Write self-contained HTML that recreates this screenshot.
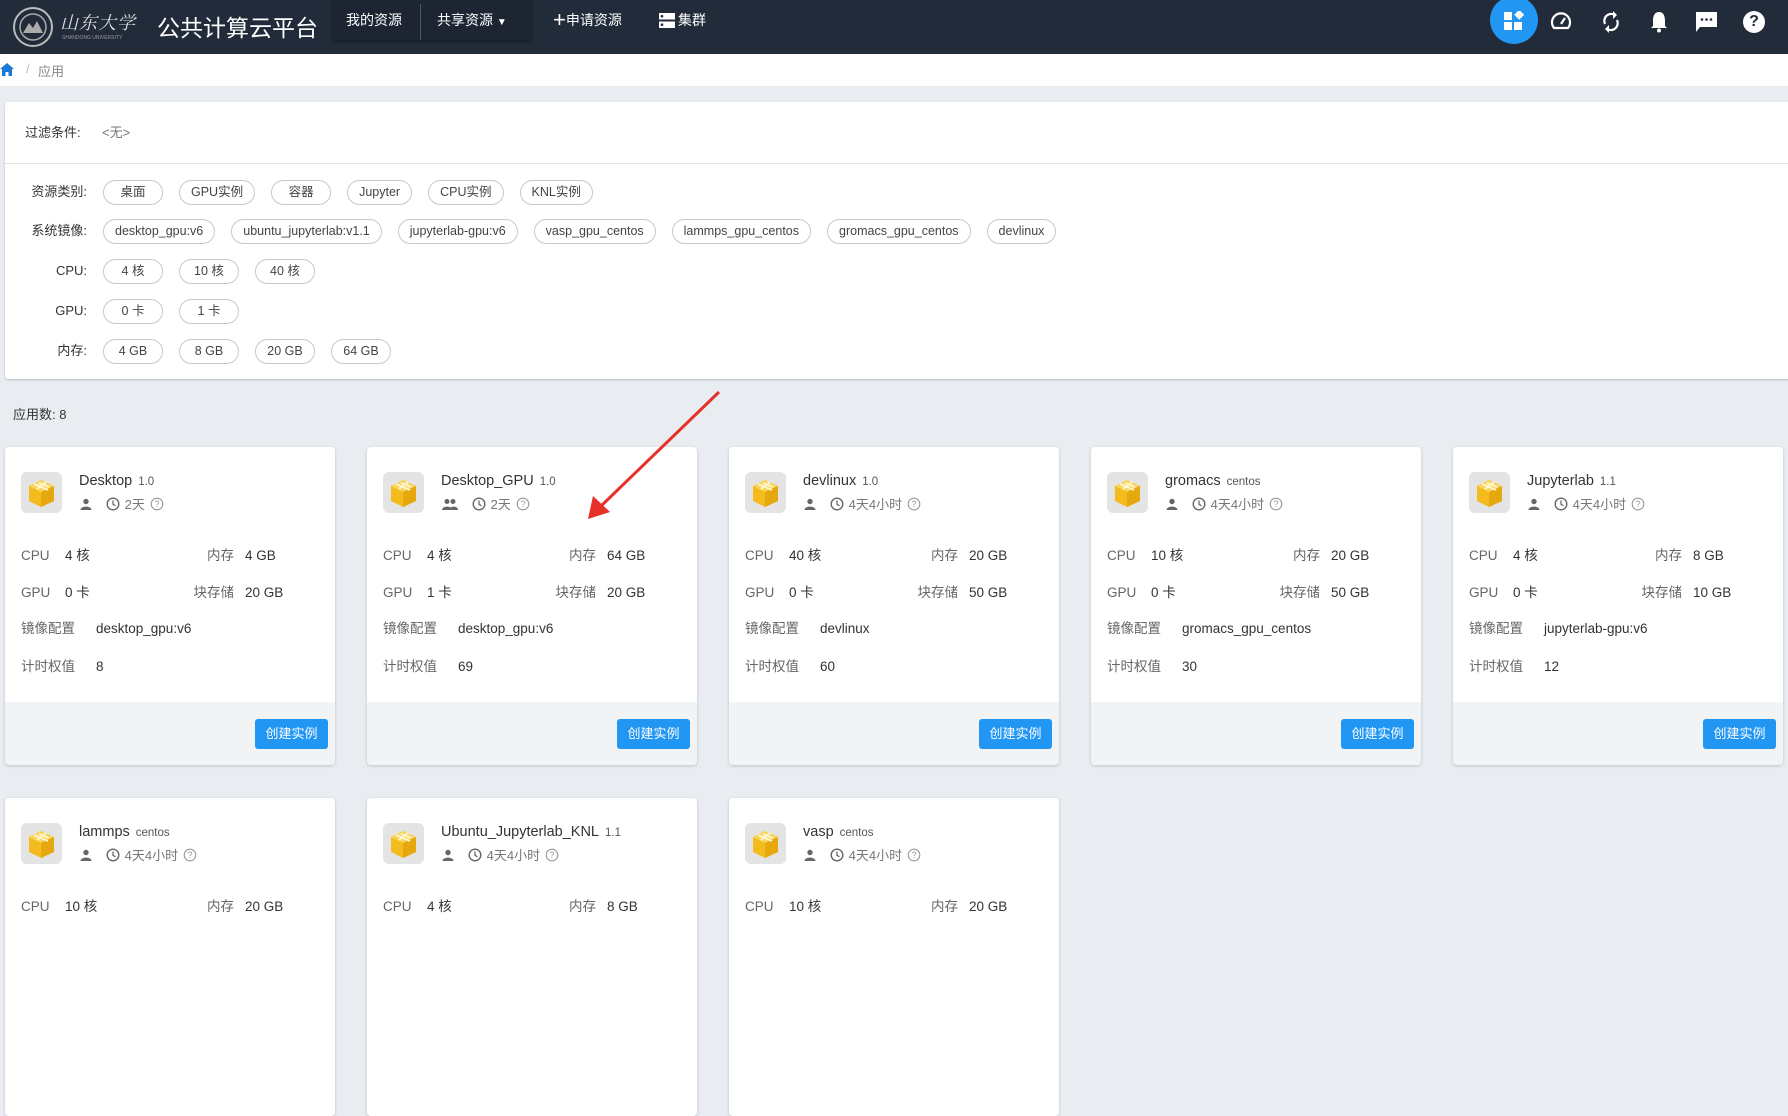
<!DOCTYPE html>
<html><head><meta charset="utf-8"><style>
*{box-sizing:border-box;margin:0;padding:0}
body{width:1788px;height:909px;overflow:hidden;background:#e9edf1;font-family:"Liberation Sans","Noto Sans CJK SC",sans-serif;color:#333;position:relative}
.hdr{position:absolute;left:0;top:0;width:1788px;height:54px;background:#222b39}
.abs{position:absolute}
.nav{position:absolute;top:0;height:40px;color:#fff;font-size:14px;line-height:40px}
.crumb{position:absolute;top:54px;left:0;width:1788px;height:32px;background:#fff}
.panel{position:absolute;left:5px;top:102px;width:1790px;height:277px;background:#fff;border-radius:3px;box-shadow:0 1px 2px rgba(0,0,0,.2)}
.row{position:absolute;left:0;height:26px;display:flex;align-items:center}
.lbl{width:80px;text-align:right;font-size:13px;color:#333;margin-right:16px;line-height:24px}
.chip{height:25px;border:1px solid #c8c8c8;border-radius:13px;padding:0 11px;font-size:12.5px;line-height:23px;color:#444;margin-right:16px;min-width:60px;text-align:center}
.card{position:absolute;width:330px;height:318px;background:#fff;border-radius:4px;box-shadow:0 1px 3px rgba(0,0,0,.18);overflow:hidden}
.card .ic{position:absolute;left:16px;top:25px;width:41px;height:41px;background:#e6e6e6;border-radius:6px}
.card .t{position:absolute;left:74px;top:26px;font-size:14.5px;color:#333}
.card .t small{font-size:11.5px;color:#555;margin-left:6px}
.card .m{position:absolute;left:75px;top:47px;font-size:13px;color:#777;display:flex;align-items:center;gap:5px}
.card .r{position:absolute;font-size:13.5px;line-height:18px}
.g{color:#666}
.card .f{position:absolute;left:0;top:255px;width:330px;height:63px;background:#f2f3f4}
.btn{position:absolute;right:7px;top:17px;width:73px;height:30px;background:#2196f3;color:#fff;font-size:13px;line-height:30px;text-align:center;border-radius:3px}
</style></head><body>
<div class="hdr">
 <svg class="abs" style="left:12px;top:6px" width="42" height="42" viewBox="0 0 42 42"><circle cx="21" cy="21" r="19" fill="none" stroke="#bbb" stroke-width="2"/><circle cx="21" cy="21" r="13" fill="none" stroke="#aaa" stroke-width="1.5"/><path d="M11 27 L17 17 L21 22 L25 15 L31 27Z" fill="#aaa"/></svg>
 <div class="abs" style="left:60px;top:9px;color:#ddd;font-family:'Noto Serif CJK SC',serif;font-size:18px;font-style:italic;letter-spacing:1px">山东大学</div>
 <div class="abs" style="left:62px;top:35px;color:#999;font-size:5px">SHANDONG UNIVERSITY</div>
 <div class="abs" style="left:157px;top:9px;color:#fff;font-size:23px">公共计算云平台</div>
 <div class="abs" style="left:332px;top:0;width:200px;height:40px;background:#1d2532;box-shadow:0 2px 3px rgba(0,0,0,.3)"></div>
 <div class="abs" style="left:420px;top:4px;width:1px;height:36px;background:#4a5566"></div>
 <div class="nav" style="left:346px">我的资源</div>
 <div class="nav" style="left:437px">共享资源 <span style="font-size:10px">▼</span></div>
 <div class="nav" style="left:553px"><span style="font-size:22px;vertical-align:-2px">+</span>申请资源</div>
 <svg class="abs" style="left:659px;top:13px" width="16" height="15"><rect x="0" y="0" width="16" height="6.5" fill="#fff"/><rect x="0" y="8.5" width="16" height="6.5" fill="#fff"/><circle cx="3" cy="3.2" r="1.3" fill="#222b39"/><circle cx="3" cy="11.7" r="1.3" fill="#222b39"/></svg>
 <div class="nav" style="left:678px">集群</div>
 <div class="abs" style="left:1490px;top:-4px;width:48px;height:48px;border-radius:50%;background:#2196f3"></div>
 <svg class="abs" style="left:1504px;top:11px" width="20" height="20"><rect x="0" y="1" width="8" height="8" fill="#fff"/><rect x="0" y="11" width="8" height="8" fill="#fff"/><rect x="10" y="11" width="8" height="8" fill="#fff"/><rect x="11" y="0" width="7" height="7" fill="#fff" transform="rotate(45 14.5 4.5)"/></svg>
 <svg class="abs" style="left:1550px;top:11px" width="22" height="20" viewBox="0 0 22 20"><path d="M4 17 A9 9 0 1 1 18 17Z" fill="none" stroke="#fff" stroke-width="2.2" stroke-linejoin="round"/><path d="M11 13 L15 7" stroke="#fff" stroke-width="2.2"/></svg>
 <svg class="abs" style="left:1601px;top:10px" width="20" height="24" viewBox="0 0 20 24"><path d="M4 14 A7 7 0 0 1 14 5" fill="none" stroke="#fff" stroke-width="2.2"/><path d="M12 1 L16 5 L12 9Z" fill="#fff"/><path d="M16 10 A7 7 0 0 1 6 19" fill="none" stroke="#fff" stroke-width="2.2"/><path d="M8 15 L4 19 L8 23Z" fill="#fff"/></svg>
 <svg class="abs" style="left:1650px;top:11px" width="18" height="22" viewBox="0 0 18 22"><path d="M9 1 C4 1 3 6 3 10 L3 15 L1 17 L17 17 L15 15 L15 10 C15 6 14 1 9 1Z" fill="#fff"/><circle cx="9" cy="19.5" r="2" fill="#fff"/></svg>
 <svg class="abs" style="left:1696px;top:12px" width="21" height="21" viewBox="0 0 21 21"><path d="M0 0 H21 V15 H4 L0 20Z" fill="#fff"/><circle cx="6" cy="7.5" r="1.3" fill="#222b39"/><circle cx="10.5" cy="7.5" r="1.3" fill="#222b39"/><circle cx="15" cy="7.5" r="1.3" fill="#222b39"/></svg>
 <div class="abs" style="left:1743px;top:11px;width:22px;height:22px;border-radius:50%;background:#fff;color:#222b39;font-weight:bold;font-size:16px;line-height:22px;text-align:center">?</div>
</div>
<div class="crumb">
 <svg class="abs" style="left:0;top:9px" width="14" height="13" viewBox="0 0 14 13"><path d="M7 0 L14 6 H12 V13 H8.5 V9 H5.5 V13 H2 V6 H0Z" fill="#1e78d8"/></svg>
 <div class="abs" style="left:26px;top:7px;font-size:13px;color:#bbb">/</div>
 <div class="abs" style="left:38px;top:7px;font-size:13px;color:#888">应用</div>
</div>
<div class="panel">
 <div class="abs" style="left:20px;top:20px;font-size:13px;color:#333">过滤条件:</div>
 <div class="abs" style="left:97px;top:20px;font-size:13px;color:#777">&lt;无&gt;</div>
 <div class="abs" style="left:0;top:61px;width:100%;height:1px;background:#e4e4e4"></div>
 <div class="row" style="top:77px;left:2px"><div class="lbl">资源类别:</div><div class="chip">桌面</div><div class="chip">GPU实例</div><div class="chip">容器</div><div class="chip">Jupyter</div><div class="chip">CPU实例</div><div class="chip">KNL实例</div></div>
 <div class="row" style="top:116px;left:2px"><div class="lbl">系统镜像:</div><div class="chip">desktop_gpu:v6</div><div class="chip">ubuntu_jupyterlab:v1.1</div><div class="chip">jupyterlab-gpu:v6</div><div class="chip">vasp_gpu_centos</div><div class="chip">lammps_gpu_centos</div><div class="chip">gromacs_gpu_centos</div><div class="chip">devlinux</div></div>
 <div class="row" style="top:156px;left:2px"><div class="lbl">CPU:</div><div class="chip">4 核</div><div class="chip">10 核</div><div class="chip">40 核</div></div>
 <div class="row" style="top:196px;left:2px"><div class="lbl">GPU:</div><div class="chip">0 卡</div><div class="chip">1 卡</div></div>
 <div class="row" style="top:236px;left:2px"><div class="lbl">内存:</div><div class="chip">4 GB</div><div class="chip">8 GB</div><div class="chip">20 GB</div><div class="chip">64 GB</div></div>
</div>
<div class="abs" style="left:13px;top:404px;font-size:13px;color:#333">应用数: 8</div>

<svg width="0" height="0" style="position:absolute"><defs>
<symbol id="box" viewBox="0 0 41 41"><rect width="41" height="41" rx="6" fill="#e4e4e4"/><path d="M8 14 L20 8 L33 14 L33 29 L20 35 L8 29Z" fill="#f3bb1b"/><path d="M8 14 L20 20 L33 14 L20 8Z" fill="#f9d45a"/><path d="M20 20 L20 35 L33 29 L33 14Z" fill="#e6a80f"/><path d="M13 12 L27 18 M16 17 L25 10 M18 11 L28 15" stroke="#fff6cf" stroke-width="2"/></symbol>
<symbol id="user" viewBox="0 0 12 12"><circle cx="6" cy="3.5" r="2.7" fill="#666"/><path d="M0.5 12 C0.5 7.5 11.5 7.5 11.5 12Z" fill="#666"/></symbol>
<symbol id="users" viewBox="0 0 16 12"><circle cx="5" cy="3.5" r="2.5" fill="#666"/><circle cx="11" cy="3.5" r="2.5" fill="#666"/><path d="M0 12 C0 7.5 10 7.5 10 12Z M7 12 C7 8 16 7 16 12Z" fill="#666"/></symbol>
<symbol id="clock" viewBox="0 0 14 14"><circle cx="7" cy="7" r="5.8" fill="none" stroke="#666" stroke-width="1.4"/><path d="M7 3.5 V7.3 L9.5 8.8" fill="none" stroke="#666" stroke-width="1.3"/></symbol>
<symbol id="q" viewBox="0 0 14 14"><circle cx="7" cy="7" r="5.8" fill="none" stroke="#999" stroke-width="1.1"/><text x="7" y="10.2" font-size="9" text-anchor="middle" fill="#999" font-family="Liberation Sans">?</text></symbol>
</defs></svg>

<div class="card" style="left:5px;top:447px"><svg class="ic" viewBox="0 0 41 41"><use href="#box"/></svg><div class="t">Desktop<small>1.0</small></div><div class="m"><svg width="12" height="12"><use href="#user"/></svg>&nbsp;<svg width="14" height="14"><use href="#clock"/></svg>2天<svg width="14" height="14"><use href="#q"/></svg></div>
<div class="r g" style="left:16px;top:100px">CPU</div><div class="r" style="left:60px;top:100px">4 核</div><div class="r g" style="right:101px;top:100px">内存</div><div class="r" style="left:240px;top:100px">4 GB</div>
<div class="r g" style="left:16px;top:137px">GPU</div><div class="r" style="left:60px;top:137px">0 卡</div><div class="r g" style="right:101px;top:137px">块存储</div><div class="r" style="left:240px;top:137px">20 GB</div>
<div class="r g" style="left:16px;top:173px">镜像配置</div><div class="r" style="left:91px;top:173px">desktop_gpu:v6</div>
<div class="r g" style="left:16px;top:211px">计时权值</div><div class="r" style="left:91px;top:211px">8</div>
<div class="f"><div class="btn">创建实例</div></div></div>

<div class="card" style="left:367px;top:447px"><svg class="ic" viewBox="0 0 41 41"><use href="#box"/></svg><div class="t">Desktop_GPU<small>1.0</small></div><div class="m"><svg width="16" height="12"><use href="#users"/></svg>&nbsp;<svg width="14" height="14"><use href="#clock"/></svg>2天<svg width="14" height="14"><use href="#q"/></svg></div>
<div class="r g" style="left:16px;top:100px">CPU</div><div class="r" style="left:60px;top:100px">4 核</div><div class="r g" style="right:101px;top:100px">内存</div><div class="r" style="left:240px;top:100px">64 GB</div>
<div class="r g" style="left:16px;top:137px">GPU</div><div class="r" style="left:60px;top:137px">1 卡</div><div class="r g" style="right:101px;top:137px">块存储</div><div class="r" style="left:240px;top:137px">20 GB</div>
<div class="r g" style="left:16px;top:173px">镜像配置</div><div class="r" style="left:91px;top:173px">desktop_gpu:v6</div>
<div class="r g" style="left:16px;top:211px">计时权值</div><div class="r" style="left:91px;top:211px">69</div>
<div class="f"><div class="btn">创建实例</div></div></div>

<div class="card" style="left:729px;top:447px"><svg class="ic" viewBox="0 0 41 41"><use href="#box"/></svg><div class="t">devlinux<small>1.0</small></div><div class="m"><svg width="12" height="12"><use href="#user"/></svg>&nbsp;<svg width="14" height="14"><use href="#clock"/></svg>4天4小时<svg width="14" height="14"><use href="#q"/></svg></div>
<div class="r g" style="left:16px;top:100px">CPU</div><div class="r" style="left:60px;top:100px">40 核</div><div class="r g" style="right:101px;top:100px">内存</div><div class="r" style="left:240px;top:100px">20 GB</div>
<div class="r g" style="left:16px;top:137px">GPU</div><div class="r" style="left:60px;top:137px">0 卡</div><div class="r g" style="right:101px;top:137px">块存储</div><div class="r" style="left:240px;top:137px">50 GB</div>
<div class="r g" style="left:16px;top:173px">镜像配置</div><div class="r" style="left:91px;top:173px">devlinux</div>
<div class="r g" style="left:16px;top:211px">计时权值</div><div class="r" style="left:91px;top:211px">60</div>
<div class="f"><div class="btn">创建实例</div></div></div>

<div class="card" style="left:1091px;top:447px"><svg class="ic" viewBox="0 0 41 41"><use href="#box"/></svg><div class="t">gromacs<small>centos</small></div><div class="m"><svg width="12" height="12"><use href="#user"/></svg>&nbsp;<svg width="14" height="14"><use href="#clock"/></svg>4天4小时<svg width="14" height="14"><use href="#q"/></svg></div>
<div class="r g" style="left:16px;top:100px">CPU</div><div class="r" style="left:60px;top:100px">10 核</div><div class="r g" style="right:101px;top:100px">内存</div><div class="r" style="left:240px;top:100px">20 GB</div>
<div class="r g" style="left:16px;top:137px">GPU</div><div class="r" style="left:60px;top:137px">0 卡</div><div class="r g" style="right:101px;top:137px">块存储</div><div class="r" style="left:240px;top:137px">50 GB</div>
<div class="r g" style="left:16px;top:173px">镜像配置</div><div class="r" style="left:91px;top:173px">gromacs_gpu_centos</div>
<div class="r g" style="left:16px;top:211px">计时权值</div><div class="r" style="left:91px;top:211px">30</div>
<div class="f"><div class="btn">创建实例</div></div></div>

<div class="card" style="left:1453px;top:447px"><svg class="ic" viewBox="0 0 41 41"><use href="#box"/></svg><div class="t">Jupyterlab<small>1.1</small></div><div class="m"><svg width="12" height="12"><use href="#user"/></svg>&nbsp;<svg width="14" height="14"><use href="#clock"/></svg>4天4小时<svg width="14" height="14"><use href="#q"/></svg></div>
<div class="r g" style="left:16px;top:100px">CPU</div><div class="r" style="left:60px;top:100px">4 核</div><div class="r g" style="right:101px;top:100px">内存</div><div class="r" style="left:240px;top:100px">8 GB</div>
<div class="r g" style="left:16px;top:137px">GPU</div><div class="r" style="left:60px;top:137px">0 卡</div><div class="r g" style="right:101px;top:137px">块存储</div><div class="r" style="left:240px;top:137px">10 GB</div>
<div class="r g" style="left:16px;top:173px">镜像配置</div><div class="r" style="left:91px;top:173px">jupyterlab-gpu:v6</div>
<div class="r g" style="left:16px;top:211px">计时权值</div><div class="r" style="left:91px;top:211px">12</div>
<div class="f"><div class="btn">创建实例</div></div></div>

<div class="card" style="left:5px;top:798px"><svg class="ic" viewBox="0 0 41 41"><use href="#box"/></svg><div class="t">lammps<small>centos</small></div><div class="m"><svg width="12" height="12"><use href="#user"/></svg>&nbsp;<svg width="14" height="14"><use href="#clock"/></svg>4天4小时<svg width="14" height="14"><use href="#q"/></svg></div>
<div class="r g" style="left:16px;top:100px">CPU</div><div class="r" style="left:60px;top:100px">10 核</div><div class="r g" style="right:101px;top:100px">内存</div><div class="r" style="left:240px;top:100px">20 GB</div></div>

<div class="card" style="left:367px;top:798px"><svg class="ic" viewBox="0 0 41 41"><use href="#box"/></svg><div class="t">Ubuntu_Jupyterlab_KNL<small>1.1</small></div><div class="m"><svg width="12" height="12"><use href="#user"/></svg>&nbsp;<svg width="14" height="14"><use href="#clock"/></svg>4天4小时<svg width="14" height="14"><use href="#q"/></svg></div>
<div class="r g" style="left:16px;top:100px">CPU</div><div class="r" style="left:60px;top:100px">4 核</div><div class="r g" style="right:101px;top:100px">内存</div><div class="r" style="left:240px;top:100px">8 GB</div></div>

<div class="card" style="left:729px;top:798px"><svg class="ic" viewBox="0 0 41 41"><use href="#box"/></svg><div class="t">vasp<small>centos</small></div><div class="m"><svg width="12" height="12"><use href="#user"/></svg>&nbsp;<svg width="14" height="14"><use href="#clock"/></svg>4天4小时<svg width="14" height="14"><use href="#q"/></svg></div>
<div class="r g" style="left:16px;top:100px">CPU</div><div class="r" style="left:60px;top:100px">10 核</div><div class="r g" style="right:101px;top:100px">内存</div><div class="r" style="left:240px;top:100px">20 GB</div></div>

<svg class="abs" style="left:0;top:0" width="1788" height="909"><line x1="719" y1="392" x2="600" y2="507" stroke="#e8302a" stroke-width="3"/><path d="M588 519 L593 496 L610 512Z" fill="#e8302a"/></svg>
</body></html>
